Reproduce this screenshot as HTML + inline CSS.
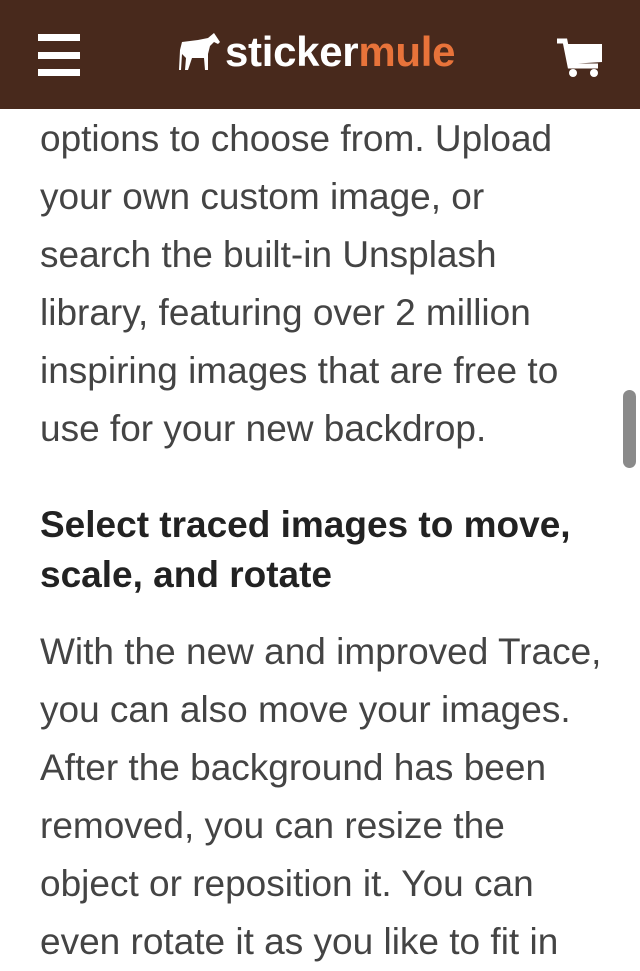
<!DOCTYPE html>
<html><head><meta charset="utf-8"><style>
body{margin:0;width:640px;height:959px;overflow:hidden;background:#fff;font-family:"Liberation Sans",Helvetica,Arial,sans-serif;position:relative}
.hdr{position:fixed;top:0;left:0;width:640px;height:109px;background:#48291c;z-index:2}
.content{position:absolute;top:110px;left:40px;width:590px;color:#444}
p{margin:0;font-size:37px;line-height:58px;white-space:nowrap}
h3{margin:42px 0 23px;font-size:37px;line-height:50px;color:#222;font-weight:bold;white-space:nowrap}
.sb{position:absolute;left:623px;top:390px;width:13px;height:78px;border-radius:7px;background:#8a8a8a}
</style></head><body>
<div class="hdr">
<div style="position:absolute;left:38px;top:34px;width:42px;height:7px;background:#fff"></div>
<div style="position:absolute;left:38px;top:52px;width:42px;height:7px;background:#fff"></div>
<div style="position:absolute;left:38px;top:69px;width:42px;height:7px;background:#fff"></div>
<svg style="position:absolute;left:178px;top:32px" width="46" height="42" viewBox="0 0 46 42"><path d="M4 10 L20 8 L30 6 L36 1 L38 4 L42 10 L40 12 L36 10 L32 14 L30 22 L30 38 L27 38 L26 26 L14 26 L10 38 L7 38 L8 26 L4 22 L3 38 L1 38 L2 18 Z" fill="#fff"/></svg>
<div style="position:absolute;left:225px;top:27px;font-size:42px;font-weight:bold;letter-spacing:-0.3px;color:#fff;line-height:50px">sticker<span style="color:#e8733a">mule</span></div>
<svg style="position:absolute;left:556px;top:38px" width="48" height="40" viewBox="0 0 48 40"><path d="M1 3 H9 L14 28 H42" stroke="#fff" stroke-width="5" fill="none"/><path d="M9 6 H46 V24 L14 26 Z" fill="#fff"/><circle cx="17" cy="35" r="4" fill="#fff"/><circle cx="38" cy="35" r="4" fill="#fff"/></svg>
</div>
<div class="content">
<p>options to choose from. Upload<br>your own custom image, or<br>search the built-in Unsplash<br>library, featuring over 2 million<br>inspiring images that are free to<br>use for your new backdrop.</p>
<h3>Select traced images to move,<br>scale, and rotate</h3>
<p>With the new and improved Trace,<br>you can also move your images.<br>After the background has been<br>removed, you can resize the<br>object or reposition it. You can<br>even rotate it as you like to fit in</p>
</div>
<div class="sb"></div>
</body></html>
